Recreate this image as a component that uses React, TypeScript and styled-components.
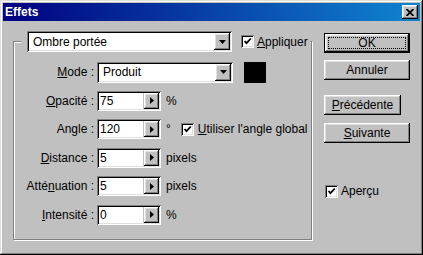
import React from "react";
import styled, { createGlobalStyle } from "styled-components";

const GlobalStyle = createGlobalStyle`
  html, body {
    margin: 0;
    padding: 0;
    background: #c0c0c0;
  }
  body {
    font-family: "Liberation Sans", Arial, sans-serif;
    font-size: 12px;
    color: #000;
  }
`;

const raised = `
  box-shadow: inset -1px -1px #000, inset 1px 1px #fff,
    inset -2px -2px #808080, inset 2px 2px #dfdfdf;
`;

const sunken = `
  box-shadow: inset 1px 1px #808080, inset -1px -1px #fff,
    inset 2px 2px #000, inset -2px -2px #dfdfdf;
`;

const Window = styled.div`
  box-sizing: border-box;
  width: 423px;
  height: 255px;
  padding: 3px;
  background: #c0c0c0;
  box-shadow: inset -1px -1px #000, inset 1px 1px #dfdfdf,
    inset -2px -2px #808080, inset 2px 2px #fff;
  display: flex;
  flex-direction: column;
`;

const TitleBar = styled.div`
  height: 18px;
  flex: none;
  display: flex;
  align-items: center;
  justify-content: space-between;
  padding: 0 2px;
  background: linear-gradient(to right, #000080, #1084d0);
`;

const Title = styled.span`
  color: #fff;
  font-weight: bold;
  font-size: 12px;
`;

const CloseButton = styled.div`
  width: 16px;
  height: 14px;
  background: #c0c0c0;
  ${raised};
  display: flex;
  align-items: center;
  justify-content: center;
`;

const Client = styled.div`
  display: flex;
  align-items: flex-start;
  padding: 10px 0 0 10px;
`;

const GroupBox = styled.fieldset`
  box-sizing: border-box;
  width: 299px;
  height: 209px;
  margin: 0;
  padding: 10px 0 0 0;
  border: 1px solid #808080;
  box-shadow: inset 1px 1px #fff, 1px 1px #fff;
  display: flex;
  flex-direction: column;
  gap: 8.5px;
`;

const Legend = styled.legend`
  margin-left: 7px;
  padding: 0 2px 0 6px;
  display: flex;
  align-items: center;
  background: #c0c0c0;
`;

const Combo = styled.div<{ $width: number }>`
  box-sizing: border-box;
  width: ${(p) => p.$width}px;
  height: 21px;
  padding: 2px;
  background: #fff;
  ${sunken};
  display: flex;
  align-items: center;
`;

const ComboText = styled.span<{ $indent: number }>`
  flex: 1;
  padding-left: ${(p) => p.$indent}px;
  white-space: nowrap;
`;

const ArrowButton = styled.div<{ $w: number; $h: number }>`
  box-sizing: border-box;
  width: ${(p) => p.$w}px;
  height: ${(p) => p.$h}px;
  flex: none;
  background: #c0c0c0;
  ${raised};
  display: flex;
  align-items: center;
  justify-content: center;
`;

const CheckLabel = styled.label<{ $gap: number }>`
  display: flex;
  align-items: center;
  gap: ${(p) => p.$gap}px;
  white-space: nowrap;
`;

const CheckBoxBox = styled.span`
  box-sizing: border-box;
  width: 13px;
  height: 13px;
  flex: none;
  background: #fff;
  ${sunken};
  display: inline-flex;
  align-items: center;
  justify-content: center;
`;

const Row = styled.div`
  display: flex;
  align-items: center;
  height: 20px;
`;

const Label = styled.span`
  width: 80px;
  margin-right: 3px;
  text-align: right;
  white-space: nowrap;
`;

const Swatch = styled.div`
  width: 22px;
  height: 21px;
  margin-left: 11px;
  background: #000;
`;

const Spin = styled.div`
  box-sizing: border-box;
  width: 64px;
  height: 20px;
  padding: 2px;
  background: #c0c0c0;
  ${sunken};
  display: flex;
`;

const SpinValue = styled.span`
  flex: 1;
  background: #fff;
  line-height: 16px;
  padding-left: 1px;
  margin-right: 1px;
`;

const Unit = styled.span`
  margin-left: 5px;
`;

const Side = styled.div`
  margin: 2px 0 0 12px;
  display: flex;
  flex-direction: column;
  align-items: flex-start;
`;

const PushButton = styled.div<{ $width: number; $gap: number; $default?: boolean }>`
  box-sizing: border-box;
  width: ${(p) => p.$width}px;
  height: 20px;
  margin-top: ${(p) => p.$gap}px;
  display: flex;
  align-items: center;
  justify-content: center;
  background: #c0c0c0;
  ${(p) =>
    p.$default
      ? `
    border: 1px solid #000;
    box-shadow: inset -1px -1px #000, inset 1px 1px #fff,
      inset -2px -2px #808080, inset 2px 2px #dfdfdf;
    outline: 1px dotted #000;
    outline-offset: -5px;
  `
      : raised}
`;

const SideCheck = styled.div`
  margin: 41px 0 0 1px;
`;

const AngleCheck = styled.div`
  margin-left: 10px;
`;

const U = styled.u`
  text-decoration: underline;
`;

function CheckMark() {
  return (
    <svg width="9" height="9" viewBox="0 0 9 9">
      <path d="M1.5 4 L3.5 6.2 L7.8 1.5" fill="none" stroke="#000" strokeWidth="1.8" />
    </svg>
  );
}

function CheckBox({ children, gap }: { children: React.ReactNode; gap: number }) {
  return (
    <CheckLabel $gap={gap}>
      <CheckBoxBox>
        <CheckMark />
      </CheckBoxBox>
      <span>{children}</span>
    </CheckLabel>
  );
}

function DownArrow() {
  return (
    <svg width="7" height="4" viewBox="0 0 7 4">
      <path d="M0 0 H7 L3.5 4 Z" fill="#000" />
    </svg>
  );
}

function RightArrow() {
  return (
    <svg width="4" height="7" viewBox="0 0 4 7">
      <path d="M0 0 V7 L4 3.5 Z" fill="#000" />
    </svg>
  );
}

function Select({ value, width, indent }: { value: string; width: number; indent: number }) {
  return (
    <Combo $width={width}>
      <ComboText $indent={indent}>{value}</ComboText>
      <ArrowButton $w={16} $h={17}>
        <DownArrow />
      </ArrowButton>
    </Combo>
  );
}

function SpinField({ value }: { value: string }) {
  return (
    <Spin>
      <SpinValue>{value}</SpinValue>
      <ArrowButton $w={15} $h={16}>
        <RightArrow />
      </ArrowButton>
    </Spin>
  );
}

const fields = [
  { label: <><U>O</U>pacité :</>, value: "75", unit: "%" },
  { label: <>Angle :</>, value: "120", unit: "°" },
  { label: <><U>D</U>istance :</>, value: "5", unit: "pixels" },
  { label: <>Atté<U>n</U>uation :</>, value: "5", unit: "pixels" },
  { label: <><U>I</U>ntensité :</>, value: "0", unit: "%" },
];

export default function App() {
  return (
    <>
      <GlobalStyle />
      <Window>
        <TitleBar>
          <Title>Effets</Title>
          <CloseButton>
            <svg width="8" height="7" viewBox="0 0 8 7">
              <path d="M0.5 0 L7.5 7 M7.5 0 L0.5 7" stroke="#000" strokeWidth="1.8" />
            </svg>
          </CloseButton>
        </TitleBar>
        <Client>
          <GroupBox>
            <Legend>
              <Select value="Ombre portée" width={205} indent={4} />
              <div style={{ width: 9 }} />
              <CheckBox gap={3}>
                <U>A</U>ppliquer
              </CheckBox>
            </Legend>
            <Row>
              <Label>
                <U>M</U>ode :
              </Label>
              <Select value="Produit" width={136} indent={4} />
              <Swatch />
            </Row>
            {fields.map((f, i) => (
              <Row key={i}>
                <Label>{f.label}</Label>
                <SpinField value={f.value} />
                <Unit>{f.unit}</Unit>
                {i === 1 && (
                  <AngleCheck>
                    <CheckBox gap={4}>
                      <U>U</U>tiliser l'angle global
                    </CheckBox>
                  </AngleCheck>
                )}
              </Row>
            ))}
          </GroupBox>
          <Side>
            <PushButton $width={86} $gap={0} $default>
              OK
            </PushButton>
            <PushButton $width={86} $gap={7}>
              Annuler
            </PushButton>
            <PushButton $width={77} $gap={15}>
              <span>
                <U>P</U>récédente
              </span>
            </PushButton>
            <PushButton $width={86} $gap={8}>
              <span>
                <U>S</U>uivante
              </span>
            </PushButton>
            <SideCheck>
              <CheckBox gap={3}>Aperçu</CheckBox>
            </SideCheck>
          </Side>
        </Client>
      </Window>
    </>
  );
}
